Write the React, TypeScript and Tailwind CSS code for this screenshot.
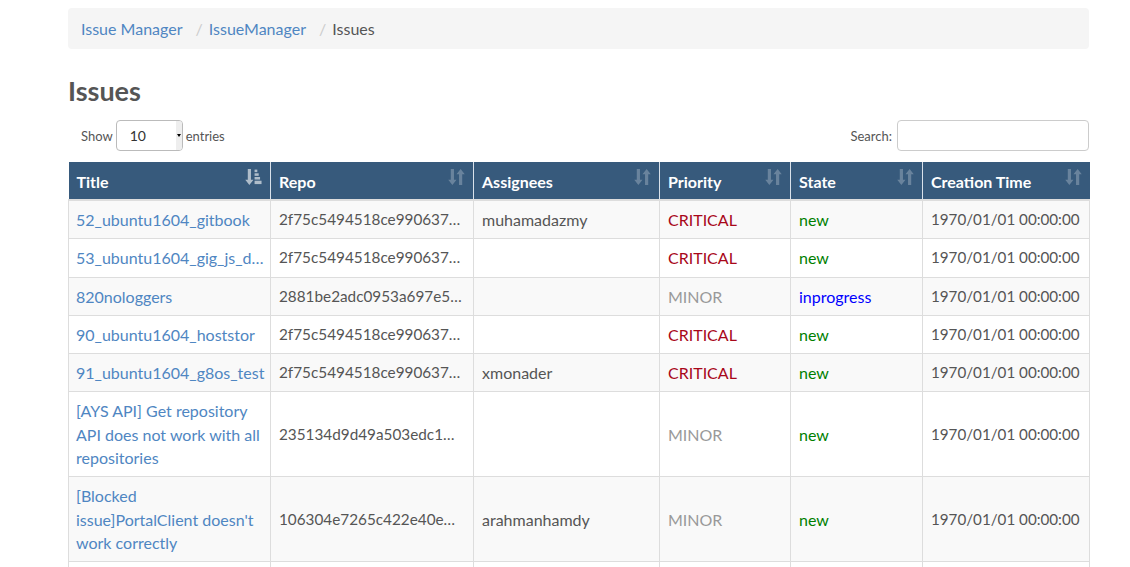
const columns = [
  { label: 'Title', width: 'w-[202px]', sorted: true },
  { label: 'Repo', width: 'w-[203px]', sorted: false },
  { label: 'Assignees', width: 'w-[186px]', sorted: false },
  { label: 'Priority', width: 'w-[131px]', sorted: false },
  { label: 'State', width: 'w-[132px]', sorted: false },
  { label: 'Creation Time', width: 'w-[167px]', sorted: false },
]

type Issue = {
  title: string
  repo: string
  assignee: string
  priority: 'CRITICAL' | 'MINOR'
  state: 'new' | 'inprogress'
  time: string
}

const issues: Issue[] = [
  { title: '52_ubuntu1604_gitbook', repo: '2f75c5494518ce990637…', assignee: 'muhamadazmy', priority: 'CRITICAL', state: 'new', time: '1970/01/01 00:00:00' },
  { title: '53_ubuntu1604_gig_js_d…', repo: '2f75c5494518ce990637…', assignee: '', priority: 'CRITICAL', state: 'new', time: '1970/01/01 00:00:00' },
  { title: '820nologgers', repo: '2881be2adc0953a697e5…', assignee: '', priority: 'MINOR', state: 'inprogress', time: '1970/01/01 00:00:00' },
  { title: '90_ubuntu1604_hoststor', repo: '2f75c5494518ce990637…', assignee: '', priority: 'CRITICAL', state: 'new', time: '1970/01/01 00:00:00' },
  { title: '91_ubuntu1604_g8os_test', repo: '2f75c5494518ce990637…', assignee: 'xmonader', priority: 'CRITICAL', state: 'new', time: '1970/01/01 00:00:00' },
  { title: '[AYS API] Get repository API does not work with all repositories', repo: '235134d9d49a503edc1…', assignee: '', priority: 'MINOR', state: 'new', time: '1970/01/01 00:00:00' },
  { title: "[Blocked issue]PortalClient doesn't work correctly", repo: '106304e7265c422e40e…', assignee: 'arahmanhamdy', priority: 'MINOR', state: 'new', time: '1970/01/01 00:00:00' },
  { title: 'Bump version', repo: '2f75c5494518ce990637…', assignee: '', priority: 'MINOR', state: 'new', time: '1970/01/01 00:00:00' },
]

function SortIcon({ sorted }: { sorted: boolean }) {
  if (sorted) {
    return (
      <svg width="17" height="18" viewBox="0 0 16 17" className="opacity-60">
        <path d="M2.6 1h3v10h2.4L4.1 16 0.2 11h2.4z" fill="#fff" />
        <rect x="9" y="1.5" width="2.6" height="2.4" fill="#fff" />
        <rect x="9" y="5" width="3.9" height="2.4" fill="#fff" />
        <rect x="9" y="8.5" width="5.2" height="2.4" fill="#fff" />
        <rect x="9" y="12" width="6.6" height="3.2" fill="#fff" />
      </svg>
    )
  }
  return (
    <svg width="17" height="18" viewBox="0 0 16 17" className="opacity-25">
      <path d="M2.6 1h3v10h2.4L4.1 16 0.2 11h2.4z" fill="#fff" />
      <path d="M10.4 16h3V6h2.4L11.9 1 8 6h2.4z" fill="#fff" />
    </svg>
  )
}

function IssueRow({ issue, striped }: { issue: Issue; striped: boolean }) {
  const cell = 'border-l border-t border-[#dddddd] px-2 py-[7px] align-middle'
  return (
    <tr className={striped ? 'bg-[#f9f9f9]' : 'bg-white'}>
      <td className={`${cell} pl-[7px]`}>
        <a href="#" className="text-[#4f86c2]">{issue.title}</a>
      </td>
      <td className={`${cell} whitespace-nowrap text-[15.3px]`}>{issue.repo}</td>
      <td className={cell}>{issue.assignee}</td>
      <td className={cell}>
        <span className={issue.priority === 'CRITICAL' ? 'text-[#a8071a]' : 'text-[#999999]'}>
          {issue.priority}
        </span>
      </td>
      <td className={cell}>
        <span className={issue.state === 'new' ? 'text-[#008000]' : 'text-[#0000ff]'}>
          {issue.state}
        </span>
      </td>
      <td className={`${cell} whitespace-nowrap border-r text-[15.2px]`}>{issue.time}</td>
    </tr>
  )
}

export default function App() {
  return (
    <div className="min-h-[567px] bg-white font-['Lato',sans-serif] text-[16px] leading-[23.3px] text-[#555555]">
      <div className="ml-[68px] w-[1021px] pt-2">
        <ol className="flex h-[41px] items-center rounded bg-[#f5f5f5] px-[13px]">
          <li>
            <a href="#" className="text-[#4f86c2]">Issue Manager</a>
          </li>
          <li>
            <span className="pl-[13px] pr-[2px] text-[#cccccc]">/ </span>
            <a href="#" className="text-[#4f86c2]">IssueManager</a>
          </li>
          <li>
            <span className="pl-[13px] pr-[2px] text-[#cccccc]">/ </span>
            <span>Issues</span>
          </li>
        </ol>

        <h1 className="mt-[27px] text-[27px] font-bold leading-[30px] text-[#555555]">Issues</h1>

        <div className="mt-[14px] flex items-center justify-between text-[13px] leading-[20px]">
          <label className="flex items-center gap-[3px] pl-[13px]">
            Show
            <div className="flex h-[31px] w-[67px] items-center overflow-hidden rounded border border-[#bbbbbb] bg-white">
              <span className="flex-1 pl-[13px] text-[14px] text-[#333]">10</span>
              <span className="flex h-full w-[6px] items-center justify-center bg-[#eeeeee]">
                <span className="h-0 w-0 border-x-[2.5px] border-t-[3px] border-x-transparent border-t-black" />
              </span>
            </div>
            entries
          </label>
          <label className="flex items-center gap-[5px]">
            Search:
            <input className="h-[31px] w-[192px] rounded border border-[#cccccc] bg-white" />
          </label>
        </div>

        <table className="mt-[11px] w-full table-fixed border-collapse">
          <thead>
            <tr className="bg-[#375a7c] text-white">
              {columns.map((col, i) => (
                <th
                  key={col.label}
                  className={`${col.width} relative h-[38px] border-b-2 border-b-[#dddddd] px-2 pt-[7px] pb-[5px] text-left font-bold ${i > 0 ? 'border-l border-l-[#d9e1ea]' : ''}`}
                >
                  {col.label}
                  <span className="absolute right-[8px] top-[6px]">
                    <SortIcon sorted={col.sorted} />
                  </span>
                </th>
              ))}
            </tr>
          </thead>
          <tbody>
            {issues.map((issue, i) => (
              <IssueRow key={issue.title} issue={issue} striped={i % 2 === 0} />
            ))}
          </tbody>
        </table>
      </div>
    </div>
  )
}
